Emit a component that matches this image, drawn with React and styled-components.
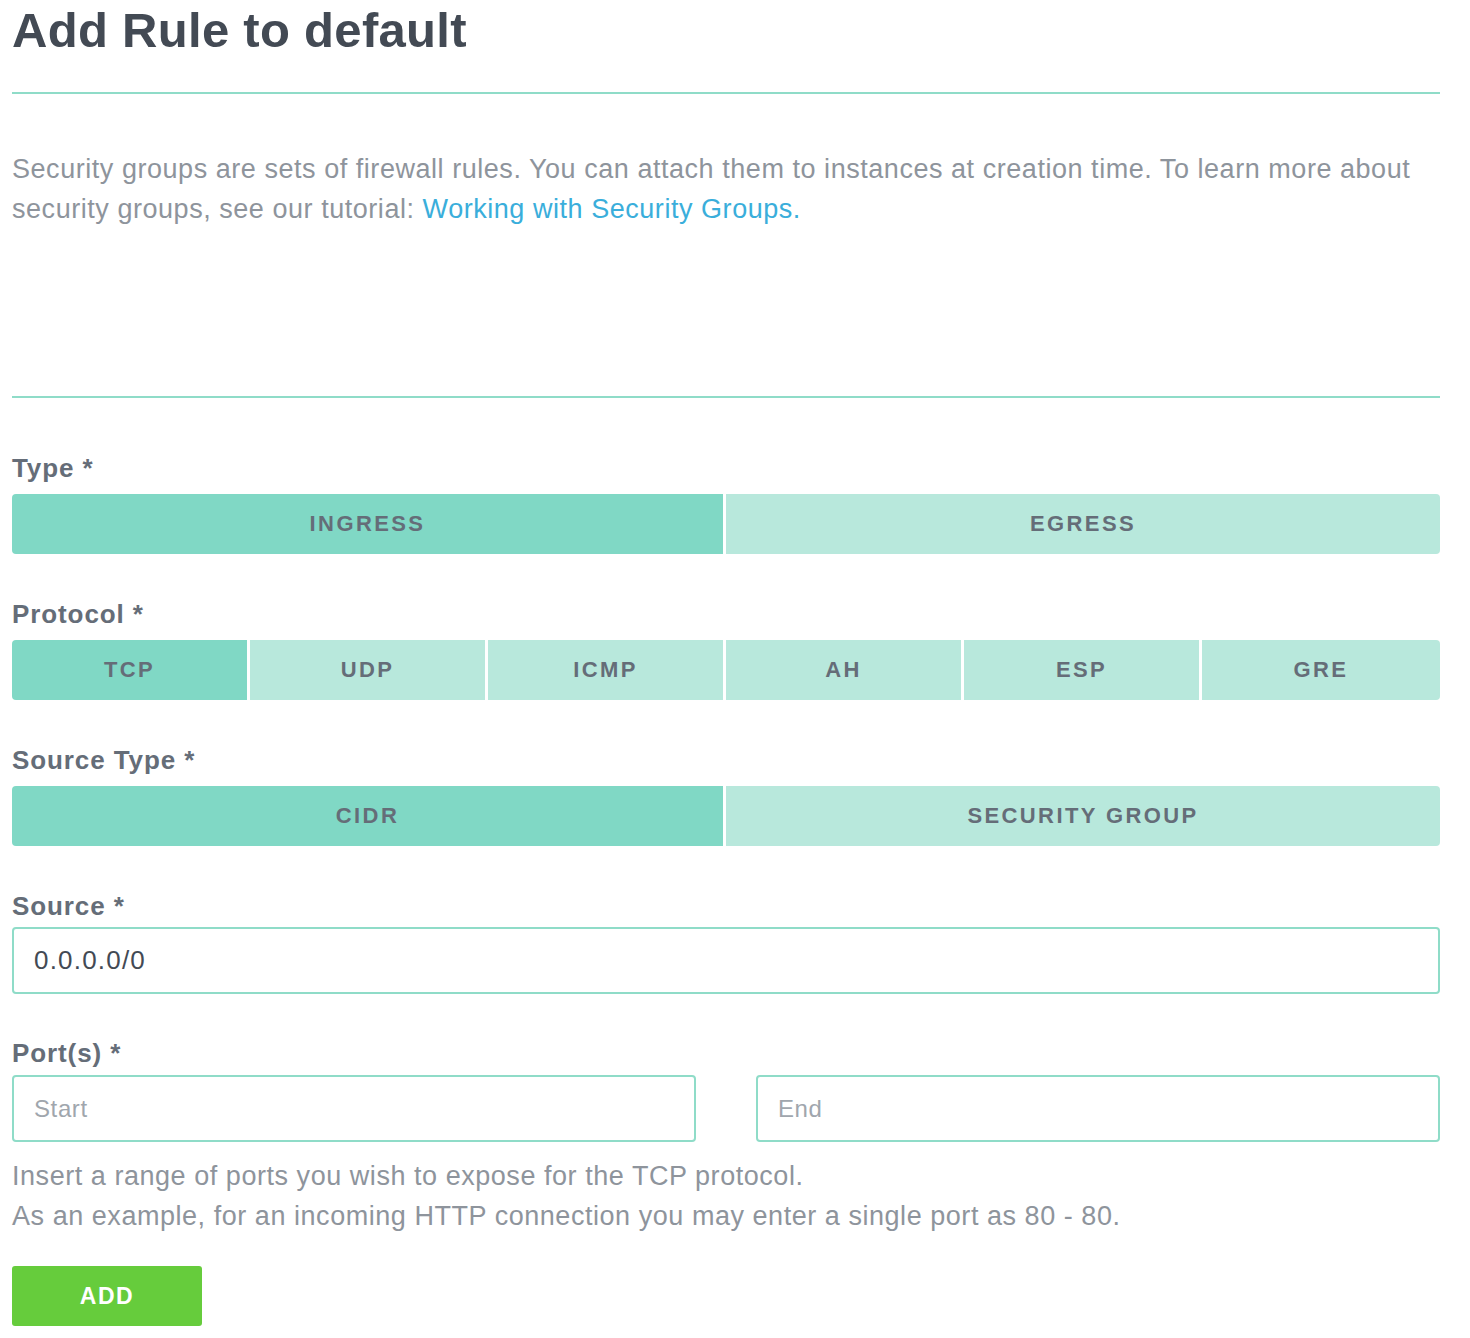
import React, { useState } from "react";
import styled, { createGlobalStyle } from "styled-components";

const Global = createGlobalStyle`
  html, body { margin: 0; padding: 0; background: #fff; }
  body { font-family: "Liberation Sans", Arial, sans-serif; }
`;

const Page = styled.div`
  width: 1428px;
  padding: 0 12px 12px;
`;

const Title = styled.h1`
  margin: 0;
  padding-top: 2px;
  font-size: 49px;
  line-height: 56px;
  font-weight: 700;
  letter-spacing: 0.3px;
  color: #434a54;
`;

const Divider = styled.hr`
  margin: ${(p) => p.$mt || 0}px 0 0;
  border: 0;
  height: 2px;
  background: #8fdcc8;
`;

const Intro = styled.p`
  margin: 55px 0 0;
  font-size: 27px;
  line-height: 40px;
  letter-spacing: 0.54px;
  color: #8e949c;
`;

const Link = styled.a`
  color: #3aaedb;
  text-decoration: none;
`;

const Spacer = styled.div`
  height: 167px;
`;

const Form = styled.div`
  display: flex;
  flex-direction: column;
  padding-top: 54px;
`;

const Field = styled.div`
  display: flex;
  flex-direction: column;
  margin-bottom: ${(p) => p.$mb ?? 44}px;
`;

const Label = styled.label`
  font-size: 26px;
  font-weight: 700;
  line-height: 32px;
  letter-spacing: 0.9px;
  color: #656d78;
  margin-bottom: ${(p) => p.$mb ?? 10}px;
`;

const Segmented = styled.div`
  display: grid;
  grid-auto-flow: column;
  grid-auto-columns: 1fr;
  height: 60px;
`;

const Segment = styled.button`
  box-sizing: border-box;
  min-width: 0;
  border: 0;
  margin: 0;
  padding: 0;
  background: ${(p) => (p.$active ? "#80d8c5" : "#b8e8dc")};
  color: #656d78;
  font-family: "Liberation Sans", Arial, sans-serif;
  font-weight: 700;
  font-size: 22px;
  letter-spacing: 2.4px;
  cursor: pointer;
  &:not(:last-child) { border-right: 3px solid #fff; }
  &:first-child { border-radius: 4px 0 0 4px; }
  &:last-child { border-radius: 0 4px 4px 0; }
`;

const Input = styled.input`
  box-sizing: border-box;
  width: 100%;
  height: 67px;
  border: 2px solid #8fdcc8;
  border-radius: 4px;
  padding: 0 20px;
  font-family: "Liberation Sans", Arial, sans-serif;
  font-size: 26px;
  letter-spacing: 1.2px;
  color: #434a54;
  outline: none;
  &::placeholder { color: #a0a6ad; font-size: 24px; letter-spacing: 0.6px; }
`;

const PortRow = styled.div`
  display: grid;
  grid-template-columns: 1fr 1fr;
  column-gap: 60px;
`;

const Help = styled.div`
  margin-top: 14px;
  font-size: 27px;
  line-height: 40px;
  letter-spacing: 0.54px;
  color: #8e949c;
`;

const AddButton = styled.button`
  margin-top: 30px;
  width: 190px;
  height: 60px;
  border: 0;
  border-radius: 3px;
  background: #66cc3c;
  color: #fff;
  font-family: "Liberation Sans", Arial, sans-serif;
  font-weight: 700;
  font-size: 23px;
  letter-spacing: 1.5px;
  align-self: flex-start;
`;

export default function App() {
  const [type, setType] = useState("INGRESS");
  const [proto, setProto] = useState("TCP");
  const [src, setSrc] = useState("CIDR");
  return (
    <Page>
      <Global />
      <Title>Add Rule to default</Title>
      <Divider $mt={34} />
      <Intro>
        Security groups are sets of firewall rules. You can attach them to instances at creation time. To learn more about security groups, see our tutorial:{" "}
        <Link href="#">Working with Security Groups.</Link>
      </Intro>
      <Spacer />
      <Divider />
      <Form>
        <Field>
          <Label>Type *</Label>
          <Segmented>
            {["INGRESS", "EGRESS"].map((t) => (
              <Segment key={t} $active={type === t} onClick={() => setType(t)}>{t}</Segment>
            ))}
          </Segmented>
        </Field>
        <Field>
          <Label>Protocol *</Label>
          <Segmented>
            {["TCP", "UDP", "ICMP", "AH", "ESP", "GRE"].map((t) => (
              <Segment key={t} $active={proto === t} onClick={() => setProto(t)}>{t}</Segment>
            ))}
          </Segmented>
        </Field>
        <Field>
          <Label>Source Type *</Label>
          <Segmented>
            {["CIDR", "SECURITY GROUP"].map((t) => (
              <Segment key={t} $active={src === t} onClick={() => setSrc(t)}>{t}</Segment>
            ))}
          </Segmented>
        </Field>
        <Field $mb={43}>
          <Label $mb={5}>Source *</Label>
          <Input defaultValue="0.0.0.0/0" />
        </Field>
        <Field $mb={0}>
          <Label $mb={6}>Port(s) *</Label>
          <PortRow>
            <Input placeholder="Start" />
            <Input placeholder="End" />
          </PortRow>
          <Help>
            Insert a range of ports you wish to expose for the TCP protocol.
            <br />
            As an example, for an incoming HTTP connection you may enter a single port as 80 - 80.
          </Help>
          <AddButton>ADD</AddButton>
        </Field>
      </Form>
    </Page>
  );
}
